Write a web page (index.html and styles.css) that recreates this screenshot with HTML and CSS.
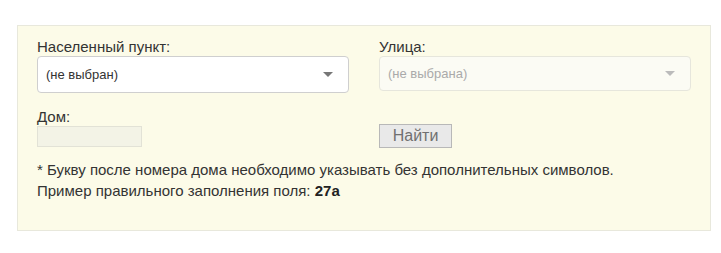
FILE: index.html
```html
<!DOCTYPE html>
<html lang="ru">
<head>
<meta charset="utf-8">
<link rel="stylesheet" href="styles.css">
</head>
<body>
<div class="panel">
  <div class="grid">
    <div class="field">
      <div class="label">Населенный пункт:</div>
      <div class="select">
        <span>(не выбран)</span>
        <span class="arrow"></span>
      </div>
    </div>
    <div class="field">
      <div class="label">Улица:</div>
      <div class="select disabled">
        <span>(не выбрана)</span>
        <span class="arrow"></span>
      </div>
    </div>
    <div class="field house">
      <div class="label">Дом:</div>
      <div class="input"></div>
    </div>
    <div class="field find">
      <button class="btn">Найти</button>
    </div>
  </div>
  <p class="note">* Букву после номера дома необходимо указывать без дополнительных символов.<br>Пример правильного заполнения поля: <b>27а</b></p>
</div>
</body>
</html>
```
FILE: styles.css
```css
html, body { margin: 0; padding: 0; background: #fff; }
body { font-family: "Liberation Sans", Arial, sans-serif; color: #333; }
.panel {
  margin: 25px 0 0 17px;
  width: 673px;
  height: 204px;
  background: #fcfbe8;
  border: 1px solid #e8e8dc;
  padding: 0 0 0 19px;
  box-sizing: content-box;
}
.grid {
  display: grid;
  grid-template-columns: 312px 312px;
  column-gap: 30px;
  align-items: start;
  padding-top: 12px;
}
.label { font-size: 15px; line-height: 17px; color: #333; }
.select {
  margin-top: 1px;
  height: 37px;
  box-sizing: border-box;
  border: 1px solid #cfcfcf;
  border-radius: 4px;
  background: #fff;
  display: flex;
  align-items: center;
  justify-content: space-between;
  padding: 0 15px 0 8px;
  font-size: 13px;
  color: #333;
}
.select.disabled {
  height: 35px;
  background: #fbfbf4;
  border-color: #e6e6dc;
  color: #aaa;
}
.arrow {
  width: 0; height: 0;
  border-left: 5px solid transparent;
  border-right: 5px solid transparent;
  border-top: 5px solid #777;
}
.select.disabled .arrow { border-top-color: #bbb; }
.house { margin-top: 15px; }
.input {
  margin-top: 1px;
  width: 105px;
  height: 21px;
  box-sizing: border-box;
  background: #f3f3e6;
  border: 1px solid #e2e2d6;
}
.find { margin-top: 31px; }
.btn {
  display: block;
  width: 73px;
  height: 24px;
  box-sizing: border-box;
  border: 1px solid #b8b8b8;
  background: #e9e9e9;
  color: #707070;
  font-family: "Liberation Sans", Arial, sans-serif;
  font-size: 16px;
  line-height: 20px;
  padding: 0;
  border-radius: 0;
}
.note {
  margin: 11px 0 0;
  font-size: 15px;
  line-height: 21px;
  color: #333;
}
.note b { color: #222; }
```
